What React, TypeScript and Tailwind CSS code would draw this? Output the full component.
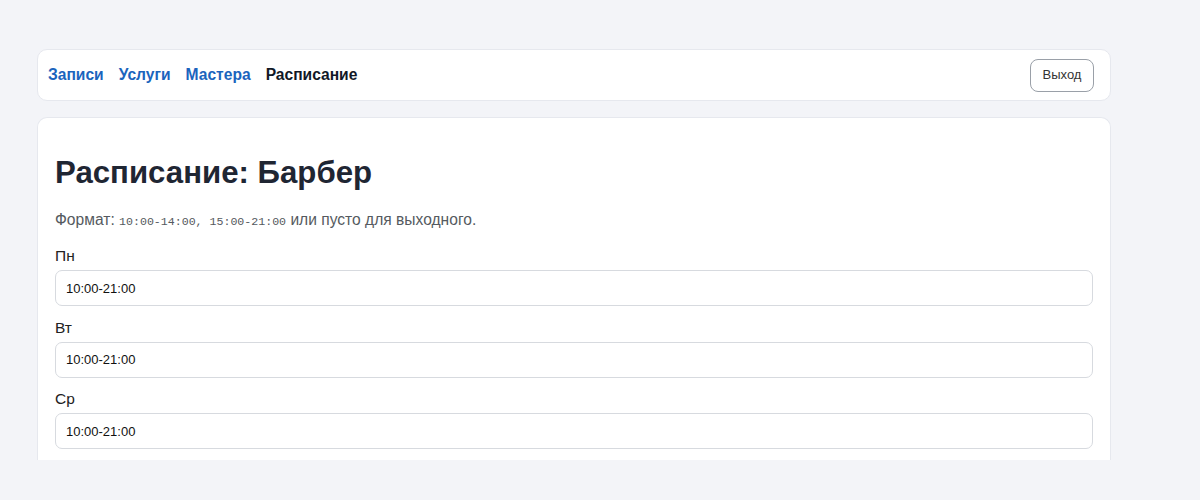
const days = [
  { label: 'Пн', value: '10:00-21:00' },
  { label: 'Вт', value: '10:00-21:00' },
  { label: 'Ср', value: '10:00-21:00' },
]

export default function App() {
  return (
    <div className="min-h-[500px] w-[1200px] bg-[#f3f4f8] pt-[49px] font-['Liberation_Sans',Arial,sans-serif]">
      {/* Top nav */}
      <nav className="ml-[37px] flex h-[52px] w-[1074px] items-center justify-between rounded-[10px] border border-[#e6e8ee] bg-white pl-[10px] pr-[16px]">
        <div className="flex items-center gap-[15px] text-[15.6px] font-bold">
          <a className="text-[#1b64bd]">Записи</a>
          <a className="text-[#1b64bd]">Услуги</a>
          <a className="text-[#1b64bd]">Мастера</a>
          <span className="text-[#111827]">Расписание</span>
        </div>
        <button className="h-[33px] w-[64px] rounded-[8px] border border-[#9aa0a8] bg-white text-[13px] text-[#333]">
          Выход
        </button>
      </nav>

      {/* Schedule card */}
      <div className="ml-[37px] mt-[16px] h-[343px] w-[1074px] overflow-hidden rounded-t-[10px] border border-b-0 border-[#e6e8ee] bg-white px-[17px] pt-[37px]">
        <h1 className="text-[31.2px] font-bold leading-[36px] text-[#1f2633]">Расписание: Барбер</h1>
        <p className="mt-[19px] text-[15.6px] leading-[20px] text-[#555a60]">
          Формат:{' '}
          <code className="font-['Liberation_Mono',monospace] text-[11.6px]">10:00-14:00, 15:00-21:00</code>{' '}
          или пусто для выходного.
        </p>
        <div className="mt-[14px] flex flex-col gap-[11.5px]">
          {days.map((d) => (
            <div key={d.label}>
              <label className="mb-[4px] block text-[15.5px] leading-[20px] text-[#222]">{d.label}</label>
              <input
                readOnly
                value={d.value}
                className="h-[36px] w-full rounded-[7px] border border-[#d7dadf] bg-white px-[10px] text-[13px] text-[#111] outline-none"
              />
            </div>
          ))}
        </div>
      </div>
    </div>
  )
}
